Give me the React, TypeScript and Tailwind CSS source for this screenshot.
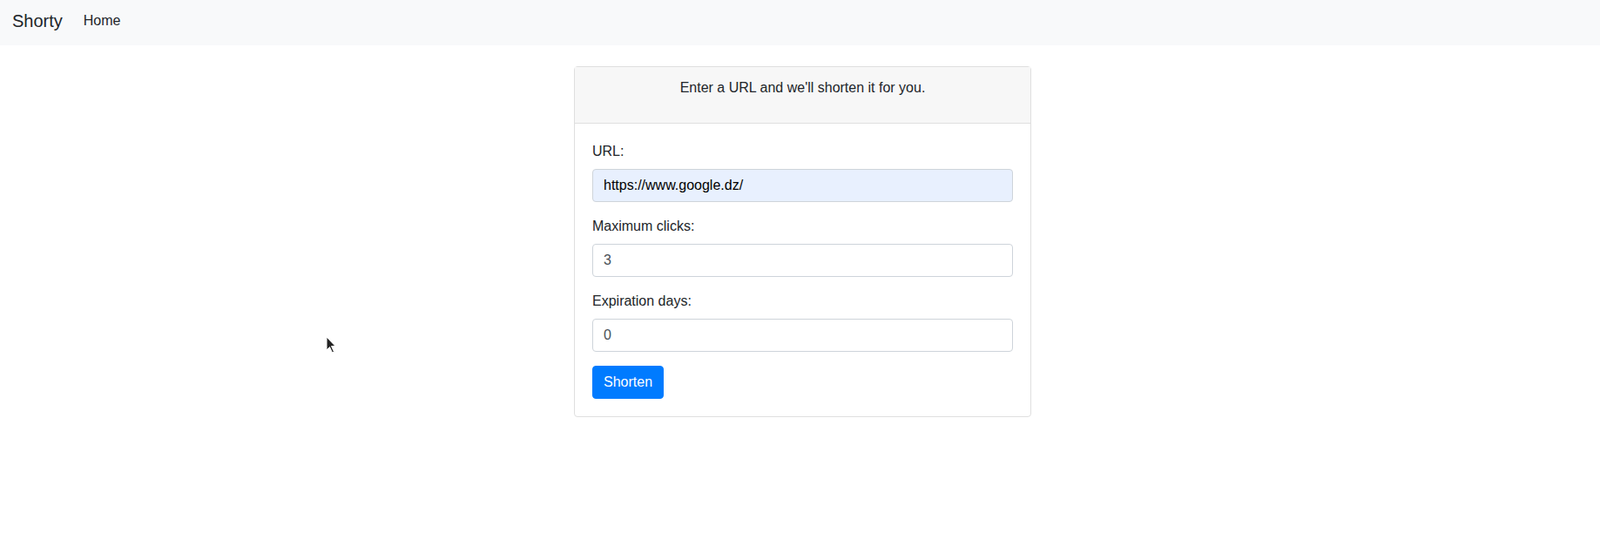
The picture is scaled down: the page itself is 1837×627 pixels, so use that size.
import { useState } from "react";

const font = { fontFamily: '"Liberation Sans", Arial, sans-serif' };

const Field = ({
  label,
  value,
  onChange,
  autofill,
}: {
  label: string;
  value: string;
  onChange: (v: string) => void;
  autofill?: boolean;
}) => (
  <div className="mb-4">
    <label className="mb-2 block text-base leading-6 text-[#212529]">{label}</label>
    <input
      value={value}
      onChange={(e) => onChange(e.target.value)}
      className={
        "block h-[38px] w-full rounded border border-[#ced4da] px-3 py-1.5 text-base leading-6 outline-none " +
        (autofill ? "bg-[#e8f0fe] text-black" : "bg-white text-[#495057]")
      }
    />
  </div>
);

const App = () => {
  const [url, setUrl] = useState("https://www.google.dz/");
  const [clicks, setClicks] = useState("3");
  const [days, setDays] = useState("0");

  return (
    <div className="relative min-h-screen bg-white" style={font}>
      <nav className="flex h-[52px] items-center bg-[#f8f9fa] pb-1 pl-[14px]">
        <a className="mr-4 text-xl leading-[30px] text-[#212529]">Shorty</a>
        <a className="px-2 text-base leading-6 text-[#212529]">Home</a>
      </nav>

      <div className="mt-6 flex justify-center pl-[6px]">
        <div className="w-[525px] rounded border border-[#dfdfdf] bg-white">
          <div className="border-b border-[#dfdfdf] bg-[#f7f7f7] px-5 py-3 text-center">
            <p className="mb-4 text-base leading-6 text-[#212529]">
              Enter a URL and we'll shorten it for you.
            </p>
          </div>
          <div className="p-5">
            <Field label="URL:" value={url} onChange={setUrl} autofill />
            <Field label="Maximum clicks:" value={clicks} onChange={setClicks} />
            <Field label="Expiration days:" value={days} onChange={setDays} />
            <button className="h-[38px] rounded border border-[#007bff] bg-[#007bff] px-3 text-base leading-6 text-white">
              Shorten
            </button>
          </div>
        </div>
      </div>

      {/* mouse pointer caught in the screenshot */}
      <svg
        className="absolute left-[374px] top-[386px]"
        width="13"
        height="21"
        viewBox="0 0 13 21"
      >
        <path
          d="M1 1 L1 16 L4.5 12.5 L7.5 19 L9.5 18 L6.5 11.5 L11 11.5 Z"
          fill="#222"
          stroke="#fff"
          strokeWidth="1"
          strokeLinejoin="round"
        />
      </svg>
    </div>
  );
};

export default App;
